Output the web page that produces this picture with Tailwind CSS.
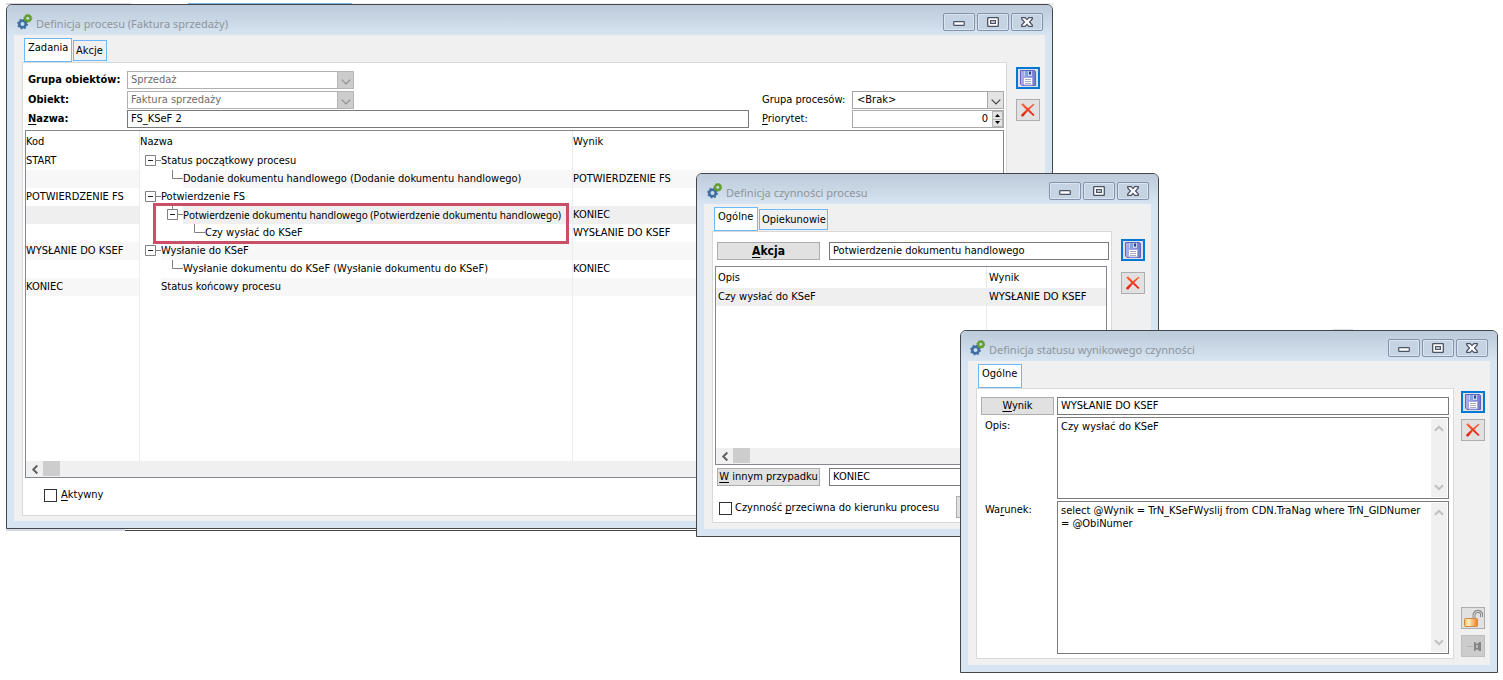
<!DOCTYPE html>
<html lang="pl">
<head>
<meta charset="utf-8">
<title>Definicja procesu</title>
<script src="https://cdn.jsdelivr.net/npm/@tailwindcss/browser@4"></script>
</head>
<body class="relative min-h-screen overflow-hidden bg-white font-['DejaVu_Sans_Condensed','DejaVu_Sans',sans-serif] text-[11px] leading-[18px] text-black">

<!-- Shared icons -->
<svg class="absolute size-0" aria-hidden="true">
  <defs>
    <linearGradient id="floppyFill" x1="0" y1="0" x2="1" y2="0"><stop offset="0" stop-color="#aeb2f0"/><stop offset="1" stop-color="#7478cf"/></linearGradient>
    <linearGradient id="brass" x1="0" y1="0" x2="1" y2="0"><stop offset="0" stop-color="#f7b64a"/><stop offset=".3" stop-color="#fff0c4"/><stop offset="1" stop-color="#ef7f1c"/></linearGradient>
    <linearGradient id="red" x1="0" y1="0" x2="0" y2="1"><stop offset="0" stop-color="#ff6a3c"/><stop offset="1" stop-color="#e81408"/></linearGradient>
    <symbol id="gears" viewBox="0 0 16 16">
      <circle cx="5.5" cy="10" r="3.3" fill="none" stroke="#3f6ea3" stroke-width="2.6"/>
      <circle cx="5.5" cy="10" r="4.7" fill="none" stroke="#3f6ea3" stroke-width="1.4" stroke-dasharray="1.8 1.9"/>
      <circle cx="10.8" cy="4.3" r="2.7" fill="none" stroke="#63a02c" stroke-width="2.3"/>
      <circle cx="10.8" cy="4.3" r="3.9" fill="none" stroke="#63a02c" stroke-width="1" stroke-dasharray="1.5 1.5"/>
    </symbol>
    <symbol id="floppy" viewBox="0 0 16 16">
      <path d="M.5.5h14l1 1v14H2L.5 14z" fill="url(#floppyFill)" stroke="#6366bd"/>
      <path d="M4 1h8v5H4z" fill="#c3d4f5"/><path d="M5 1h3v5H5z" fill="#7fa3e2"/><path d="M9 1.500h2v3H9z" fill="#2f3f86"/>
      <path d="M3.500 7.500h9V15h-9z" fill="#fff" stroke="#a5a8e6"/>
      <path d="M5 9.500h6M5 11.500h6M5 13.500h6" stroke="#a9acb8"/>
    </symbol>
    <symbol id="cross" viewBox="0 0 16 16">
      <path d="M1.200 2.600 3 1.200 8 6.200 13.400 1.800 14.600 2.600 9.300 7.600 14.500 13 13.300 14 7.800 9.100 3.300 14.600 1.200 14.300 1.400 12.500 6.300 7.700z" fill="url(#red)"/>
    </symbol>
    <symbol id="padlock" viewBox="0 0 20 19">
      <path d="M11 10V6a4 4 0 0 1 7.500-1.500V8" fill="none" stroke="#8b8b8b" stroke-width="3"/>
      <path d="M11 10V6a4 4 0 0 1 7.500-1.500V8" fill="none" stroke="#dcdcdc" stroke-width="1"/>
      <rect x="1.500" y="9.500" width="13" height="8" rx="1" fill="url(#brass)" stroke="#c98b45"/>
    </symbol>
    <symbol id="pin" viewBox="0 0 20 16">
      <path d="M4 8.500h6" stroke="#b4b4b4"/><path d="M11 4h1.500v1.500h3V4H18v9h-2.500v-1.500h-3V13H11z" fill="#858585"/><path d="M13 7h2v3h-2z" fill="#bababa"/>
    </symbol>
    <symbol id="wmin" viewBox="0 0 12 12"><rect x=".7" y="5.700" width="10.600" height="3.600" rx=".6" fill="#fff" stroke="#4b5263" stroke-width="1.200"/></symbol>
    <symbol id="wmax" viewBox="0 0 12 12"><rect x=".7" y="1.700" width="10.600" height="8.600" rx=".6" fill="#fff" stroke="#4b5263" stroke-width="1.300"/><rect x="3.600" y="4.600" width="4.800" height="2.800" fill="#dfe6f0" stroke="#4b5263" stroke-width="1.200"/></symbol>
    <symbol id="wclose" viewBox="0 0 12 12"><path d="M.7 1.700H4.200L6 3.700 7.800 1.700H11.300V3L8.500 6 11.300 9V10.300H7.800L6 8.300 4.200 10.300H.7V9L3.500 6 .7 3z" fill="#fff" stroke="#4b5263" stroke-width="1.200"/></symbol>
    <symbol id="chev" viewBox="0 0 10 6"><path d="M.7.700 5 5 9.300.700" fill="none" stroke="currentColor" stroke-width="1.200"/></symbol>
    <symbol id="chevBold" viewBox="0 0 10 7"><path d="M1 1.200 5 5.200 9 1.200" fill="none" stroke="currentColor" stroke-width="2"/></symbol>
  </defs>
</svg>

<!-- Edges of the window that lies underneath -->
<div class="absolute left-[6px] top-[3px] h-[2px] w-[125px] bg-[#d8d8de]"></div>
<div class="absolute left-[188px] top-[3px] h-[2px] w-[164px] bg-[#79b4e8]"></div>
<div class="absolute left-[352px] top-[3px] h-[2px] w-[702px] bg-[#ededed]"></div>
<div class="absolute left-[6px] top-[529px] h-[2px] w-[119px] bg-[#d5d9e8]"></div>
<div class="absolute left-[125px] top-[530px] h-[1px] w-[580px] bg-[#444]"></div>
<div class="absolute left-[1333px] top-[329px] h-[1px] w-[20px] bg-[#ddd]"></div>

<!-- Window 1: process definition -->
<section class="absolute left-[6px] top-[4px] flex h-[525px] w-[1047px] flex-col rounded-t-[6px] border border-[#43464b] bg-[#d7e4f2]">
  <header class="flex h-[30px] shrink-0 items-center rounded-t-[5px] bg-linear-to-b from-[#bccad9] to-[#d7e4f2] pl-[10px] pr-[9px]">
    <svg class="mt-1 size-4"><use href="#gears"/></svg>
    <h1 class="ml-[3px] mt-2 flex-1 font-['Noto_Sans',sans-serif] text-[11px] text-[#8d959e]">Definicja procesu (Faktura sprzedaży)</h1>
    <div class="mt-1 flex gap-[2px]">
      <button aria-label="Minimalizuj" class="grid h-[18px] w-8 place-items-center rounded-[2px] border border-[#8493ad] bg-[#c6d3e2] shadow-[inset_0_0_0_1px_#dbe5f0]"><svg class="size-3"><use href="#wmin"/></svg></button>
      <button aria-label="Maksymalizuj" class="grid h-[18px] w-8 place-items-center rounded-[2px] border border-[#8493ad] bg-[#c6d3e2] shadow-[inset_0_0_0_1px_#dbe5f0]"><svg class="size-3"><use href="#wmax"/></svg></button>
      <button aria-label="Zamknij" class="grid h-[18px] w-8 place-items-center rounded-[2px] border border-[#8493ad] bg-[#c6d3e2] shadow-[inset_0_0_0_1px_#dbe5f0]"><svg class="size-3"><use href="#wclose"/></svg></button>
    </div>
  </header>
  <div class="mx-[7px] mb-[7px] flex min-h-0 flex-1 bg-[#f0f0f0] pb-[5px] pl-2 pr-[5px]">
    <div class="flex min-w-0 flex-1 flex-col">
      <nav class="flex h-[27px] gap-px pl-[2px] pt-[3px]">
        <button class="h-6 w-12 border border-[#6cb9f9] bg-white pb-1 pl-[3px] text-left">Zadania</button>
        <button class="mt-[2px] h-[21px] w-[34px] border border-[#6cb9f9] bg-[#f0f0f0] pl-[2px] text-left">Akcje</button>
      </nav>
      <div class="flex min-h-0 flex-1 flex-col border border-[#d9d9d9] bg-white pl-[2px] pr-[2px] pt-2">
        <form class="grid grid-cols-[102px_minmax(0,1fr)_103px_152px] grid-rows-[20px_19px_20px]">
          <label for="grp" class="pl-[3px] font-bold">Grupa obiektów:</label>
          <div class="relative h-[18px] w-[227px]">
            <select id="grp" disabled class="h-[18px] w-full appearance-none border border-[#b0b0b0] bg-white pl-[3px] leading-4 text-[#6d6d6d] opacity-100"><option>Sprzedaż</option></select>
            <span class="pointer-events-none absolute inset-y-0 right-0 grid w-[17px] place-items-center border border-[#b5b5b5] bg-[#cccccc] text-[#8f8f8f]"><svg class="mt-1 h-[6px] w-[10px]"><use href="#chev"/></svg></span>
          </div>
          <span></span><span></span>
          <label for="obj" class="pl-[3px] font-bold">Obiekt:</label>
          <div class="relative h-[18px] w-[227px]">
            <select id="obj" disabled class="h-[18px] w-full appearance-none border border-[#b0b0b0] bg-white pl-[3px] leading-4 text-[#6d6d6d] opacity-100"><option>Faktura sprzedaży</option></select>
            <span class="pointer-events-none absolute inset-y-0 right-0 grid w-[17px] place-items-center border border-[#b5b5b5] bg-[#cccccc] text-[#8f8f8f]"><svg class="mt-1 h-[6px] w-[10px]"><use href="#chev"/></svg></span>
          </div>
          <label for="gp" class="pl-[13px]">Grupa procesów:</label>
          <div class="relative h-[18px]">
            <select id="gp" class="h-[18px] w-full appearance-none border border-[#a3a3a3] bg-white pl-1 leading-4"><option>&lt;Brak&gt;</option></select>
            <span class="pointer-events-none absolute inset-y-0 right-0 grid w-[17px] place-items-center border border-[#a9a9a9] bg-[#e3e3e3] text-[#444]"><svg class="mt-1 h-[6px] w-[10px]"><use href="#chev"/></svg></span>
          </div>
          <label for="nazwa" class="pl-[3px] font-bold"><u class="underline-offset-2">N</u>azwa:</label>
          <input id="nazwa" value="FS_KSeF 2" class="h-[18px] w-full border border-[#7a7a7a] bg-white pl-[3px]">
          <label for="prio" class="pl-[13px]"><u class="underline-offset-2">P</u>riorytet:</label>
          <div class="flex h-[18px] border border-[#a9a9a9] bg-white">
            <input id="prio" value="0" class="min-w-0 flex-1 pr-1 text-right">
            <span class="flex w-[11px] flex-col border border-[#b5b5b5] bg-[#e3e3e3]">
              <button type="button" aria-label="Zwiększ" class="grid flex-1 place-items-center border-b border-[#b5b5b5]"><svg class="h-[3px] w-[5px]" viewBox="0 0 5 3"><path d="M0 3 2.500 0 5 3z"/></svg></button>
              <button type="button" aria-label="Zmniejsz" class="grid flex-1 place-items-center"><svg class="h-[3px] w-[5px]" viewBox="0 0 5 3"><path d="M0 0 2.500 3 5 0z"/></svg></button>
            </span>
          </div>
        </form>

        <div class="relative flex min-h-0 flex-1 flex-col border border-[#828790]">
          <table class="h-full w-full table-fixed border-separate border-spacing-0 whitespace-nowrap">
            <colgroup><col class="w-[113px]"><col class="w-[433px]"><col></colgroup>
            <thead><tr class="h-[21px] text-left align-middle [&>th]:p-0 [&>th]:font-normal [&>th+th]:border-l [&>th+th]:border-[#e8e8e8]"><th>Kod</th><th>Nazwa</th><th>Wynik</th></tr></thead>
            <tbody class="[&_td]:h-[18px] [&_td]:p-0 [&_td+td]:border-l [&_td+td]:border-[#ececec]">
              <tr><td>START</td><td><div class="flex h-[18px] pl-[5px]"><svg class="h-[18px] w-4" viewBox="0 0 16 18"><path d="M.5 3.500h10v10H.5zM11 8.500h5" fill="none" stroke="#808080"/><path d="M3 8.500h5" stroke="#222"/></svg><span class="flex-1">Status początkowy procesu</span></div></td><td></td></tr>
              <tr><td class="bg-[#f7f7f7]"></td><td><div class="flex h-[18px] pl-8"><svg class="h-[18px] w-[11px]" viewBox="0 0 11 18"><path d="M.5 0v8.500H11" fill="none" stroke="#808080"/></svg><span class="flex-1 bg-[#f7f7f7]">Dodanie dokumentu handlowego (Dodanie dokumentu handlowego)</span></div></td><td class="bg-[#f7f7f7]">POTWIERDZENIE FS</td></tr>
              <tr><td>POTWIERDZENIE FS</td><td><div class="flex h-[18px] pl-[5px]"><svg class="h-[18px] w-4" viewBox="0 0 16 18"><path d="M.5 3.500h10v10H.5zM11 8.500h5" fill="none" stroke="#808080"/><path d="M3 8.500h5" stroke="#222"/></svg><span class="flex-1">Potwierdzenie FS</span></div></td><td></td></tr>
              <tr><td class="bg-[#efefef]"></td><td><div class="flex h-[18px] pl-[27px]"><svg class="h-[18px] w-4" viewBox="0 0 16 18"><path d="M5.500 0v3M.5 3.500h10v10H.5zM11 8.500h5" fill="none" stroke="#808080"/><path d="M3 8.500h5" stroke="#222"/></svg><span class="flex-1 bg-[#efefef] font-['Noto_Sans',sans-serif] text-[10px]">Potwierdzenie dokumentu handlowego (Potwierdzenie dokumentu handlowego)</span></div></td><td class="bg-[#efefef]">KONIEC</td></tr>
              <tr><td></td><td><div class="flex h-[18px] pl-[54px]"><svg class="h-[18px] w-[11px]" viewBox="0 0 11 18"><path d="M.5 0v8.500H11" fill="none" stroke="#808080"/></svg><span class="flex-1">Czy wysłać do KSeF</span></div></td><td>WYSŁANIE DO KSEF</td></tr>
              <tr><td class="bg-[#f7f7f7]">WYSŁANIE DO KSEF</td><td><div class="flex h-[18px] pl-[5px]"><svg class="h-[18px] w-4" viewBox="0 0 16 18"><path d="M.5 3.500h10v10H.5zM11 8.500h5" fill="none" stroke="#808080"/><path d="M3 8.500h5" stroke="#222"/></svg><span class="flex-1 bg-[#f7f7f7]">Wysłanie do KSeF</span></div></td><td class="bg-[#f7f7f7]"></td></tr>
              <tr><td></td><td><div class="flex h-[18px] pl-8"><svg class="h-[18px] w-[11px]" viewBox="0 0 11 18"><path d="M.5 0v8.500H11" fill="none" stroke="#808080"/></svg><span class="flex-1">Wysłanie dokumentu do KSeF (Wysłanie dokumentu do KSeF)</span></div></td><td>KONIEC</td></tr>
              <tr><td class="bg-[#f7f7f7]">KONIEC</td><td><div class="flex h-[18px] pl-[21px]"><span class="flex-1 bg-[#f7f7f7]">Status końcowy procesu</span></div></td><td class="bg-[#f7f7f7]"></td></tr>
              <tr class="h-full"><td></td><td></td><td></td></tr>
            </tbody>
          </table>
          <div class="flex h-4 shrink-0 bg-[#f0f0f0]">
            <button aria-label="Przewiń w lewo" class="grid w-[17px] place-items-center text-[#606060]"><svg class="h-[7px] w-[10px] rotate-90"><use href="#chevBold"/></svg></button>
            <span class="h-[15px] w-[17px] bg-[#cdcdcd]"></span>
          </div>
          <div class="pointer-events-none absolute left-[127px] top-[72px] h-[41px] w-[416px] border-[3px] border-[#c94f66]"></div>
        </div>
        <label class="mb-[11px] ml-[19px] mt-2 flex h-[18px] items-center gap-1"><input type="checkbox" class="size-[13px] appearance-none border border-[#333] bg-white"><span><u class="underline-offset-2">A</u>ktywny</span></label>
      </div>
    </div>
    <aside class="ml-[9px] mt-8 flex w-6 flex-col gap-[10px]">
      <button aria-label="Zapisz" class="grid h-[22px] w-6 place-items-center border-2 border-[#0078d7] bg-[#e1e1e1]"><svg class="size-4"><use href="#floppy"/></svg></button>
      <button aria-label="Anuluj" class="grid h-[22px] w-6 place-items-center border border-[#adadad] bg-[#e1e1e1]"><svg class="size-4"><use href="#cross"/></svg></button>
    </aside>
  </div>
</section>

<!-- Window 2: process action -->
<section class="absolute left-[696px] top-[173px] flex h-[364px] w-[463px] flex-col rounded-t-[6px] border border-[#43464b] bg-[#d7e4f2]">
  <header class="flex h-[30px] shrink-0 items-center rounded-t-[5px] bg-linear-to-b from-[#bccad9] to-[#d7e4f2] pl-[10px] pr-[9px]">
    <svg class="mt-1 size-4"><use href="#gears"/></svg>
    <h1 class="ml-[3px] mt-2 flex-1 font-['Noto_Sans',sans-serif] text-[11px] text-[#8d959e]">Definicja czynności procesu</h1>
    <div class="mt-1 flex gap-[2px]">
      <button aria-label="Minimalizuj" class="grid h-[18px] w-8 place-items-center rounded-[2px] border border-[#8493ad] bg-[#c6d3e2] shadow-[inset_0_0_0_1px_#dbe5f0]"><svg class="size-3"><use href="#wmin"/></svg></button>
      <button aria-label="Maksymalizuj" class="grid h-[18px] w-8 place-items-center rounded-[2px] border border-[#8493ad] bg-[#c6d3e2] shadow-[inset_0_0_0_1px_#dbe5f0]"><svg class="size-3"><use href="#wmax"/></svg></button>
      <button aria-label="Zamknij" class="grid h-[18px] w-8 place-items-center rounded-[2px] border border-[#8493ad] bg-[#c6d3e2] shadow-[inset_0_0_0_1px_#dbe5f0]"><svg class="size-3"><use href="#wclose"/></svg></button>
    </div>
  </header>
  <div class="mx-[7px] mb-[7px] flex min-h-0 flex-1 bg-[#f0f0f0] pb-[6px] pl-2 pr-[6px]">
    <div class="flex min-w-0 flex-1 flex-col">
      <nav class="flex h-[27px] gap-px pl-[2px] pt-[3px]">
        <button class="h-6 w-11 border border-[#6cb9f9] bg-white pb-1 pl-[3px] text-left">Ogólne</button>
        <button class="mt-[2px] h-[21px] w-[69px] border border-[#6cb9f9] bg-[#f0f0f0] pl-[2px] text-left">Opiekunowie</button>
      </nav>
      <div class="flex min-h-0 flex-1 flex-col border border-[#d9d9d9] bg-white pl-[2px] pr-[2px] pt-[10px]">
        <div class="flex gap-[9px] pl-[2px]">
          <button class="h-[18px] w-[103px] border border-[#adadad] bg-[#e1e1e1] text-[12px] font-bold leading-4"><u class="underline-offset-2">A</u>kcja</button>
          <input aria-label="Akcja" value="Potwierdzenie dokumentu handlowego" class="h-[18px] min-w-0 flex-1 border border-[#7a7a7a] bg-white pl-[3px]">
        </div>
        <div class="mr-[2px] mt-[6px] flex min-h-0 flex-1 flex-col border border-[#828790]">
          <table class="h-full w-full table-fixed border-separate border-spacing-0 whitespace-nowrap">
            <colgroup><col class="w-[270px]"><col></colgroup>
            <thead><tr class="h-[21px] text-left align-middle [&>th]:p-0 [&>th]:pl-[2px] [&>th]:font-normal [&>th+th]:border-l [&>th+th]:border-[#e8e8e8]"><th>Opis</th><th>Wynik</th></tr></thead>
            <tbody class="[&_td]:h-[18px] [&_td]:p-0 [&_td]:pl-[2px] [&_td+td]:border-l [&_td+td]:border-[#ececec]">
              <tr class="bg-[#efefef]"><td>Czy wysłać do KSeF</td><td>WYSŁANIE DO KSEF</td></tr>
              <tr class="h-full"><td></td><td></td></tr>
            </tbody>
          </table>
          <div class="flex h-4 shrink-0 bg-[#f0f0f0]">
            <button aria-label="Przewiń w lewo" class="grid w-[17px] place-items-center text-[#606060]"><svg class="h-[7px] w-[10px] rotate-90"><use href="#chevBold"/></svg></button>
            <span class="h-[15px] w-[17px] bg-[#cdcdcd]"></span>
          </div>
        </div>
        <div class="mt-[3px] flex gap-[9px] pl-[2px]">
          <button class="h-[18px] w-[103px] whitespace-nowrap border border-[#adadad] bg-[#e1e1e1] leading-4"><u class="underline-offset-2">W</u> innym przypadku</button>
          <input aria-label="W innym przypadku" value="KONIEC" class="h-[18px] min-w-0 flex-1 border border-[#7a7a7a] bg-white pl-[3px]">
        </div>
        <div class="mb-1 mt-[10px] flex h-[22px] items-center pl-1">
          <label class="mt-[2px] flex w-[237px] items-center gap-[3px] whitespace-nowrap"><input type="checkbox" class="size-[13px] appearance-none border border-[#333] bg-white"><span>Czynność <u class="underline-offset-2">p</u>rzeciwna do kierunku procesu</span></label>
          <button aria-label="Więcej" class="h-[22px] w-[100px] border border-[#adadad] bg-[#e1e1e1]"></button>
        </div>
      </div>
    </div>
    <aside class="ml-[9px] mt-[35px] flex w-6 flex-col gap-[11px]">
      <button aria-label="Zapisz" class="grid h-[22px] w-6 place-items-center border-2 border-[#0078d7] bg-[#e1e1e1]"><svg class="size-4"><use href="#floppy"/></svg></button>
      <button aria-label="Anuluj" class="grid h-[22px] w-6 place-items-center border border-[#adadad] bg-[#e1e1e1]"><svg class="size-4"><use href="#cross"/></svg></button>
    </aside>
  </div>
</section>

<!-- Window 3: resulting status -->
<section class="absolute left-[960px] top-[330px] flex h-[343px] w-[538px] flex-col rounded-t-[6px] border border-[#43464b] bg-[#d7e4f2]">
  <header class="flex h-[30px] shrink-0 items-center rounded-t-[5px] bg-linear-to-b from-[#bccad9] to-[#d7e4f2] pl-[9px] pr-[9px]">
    <svg class="mt-1 size-4"><use href="#gears"/></svg>
    <h1 class="ml-[3px] mt-2 flex-1 font-['Noto_Sans',sans-serif] text-[11px] text-[#8d959e]">Definicja statusu wynikowego czynności</h1>
    <div class="mt-1 flex gap-[2px]">
      <button aria-label="Minimalizuj" class="grid h-[18px] w-8 place-items-center rounded-[2px] border border-[#8493ad] bg-[#c6d3e2] shadow-[inset_0_0_0_1px_#dbe5f0]"><svg class="size-3"><use href="#wmin"/></svg></button>
      <button aria-label="Maksymalizuj" class="grid h-[18px] w-8 place-items-center rounded-[2px] border border-[#8493ad] bg-[#c6d3e2] shadow-[inset_0_0_0_1px_#dbe5f0]"><svg class="size-3"><use href="#wmax"/></svg></button>
      <button aria-label="Zamknij" class="grid h-[18px] w-8 place-items-center rounded-[2px] border border-[#8493ad] bg-[#c6d3e2] shadow-[inset_0_0_0_1px_#dbe5f0]"><svg class="size-3"><use href="#wclose"/></svg></button>
    </div>
  </header>
  <div class="mx-[7px] mb-[7px] flex min-h-0 flex-1 bg-[#f0f0f0] pb-[6px] pl-2 pr-[5px]">
    <div class="flex min-w-0 flex-1 flex-col">
      <nav class="flex h-[27px] pl-[2px] pt-[3px]">
        <button class="h-6 w-11 border border-[#6cb9f9] bg-white pb-1 pl-[3px] text-left">Ogólne</button>
      </nav>
      <div class="grid min-h-0 flex-1 grid-cols-[73px_minmax(0,1fr)] grid-rows-[18px_82px_minmax(0,1fr)] gap-x-[3px] gap-y-[2px] border border-[#d9d9d9] bg-white pb-1 pl-1 pr-1 pt-2">
        <button class="h-[18px] border border-[#adadad] bg-[#e1e1e1] leading-4"><u class="underline-offset-2">W</u>ynik</button>
        <input aria-label="Wynik" value="WYSŁANIE DO KSEF" class="h-[18px] w-full border border-[#7a7a7a] bg-white pl-[3px]">
        <label for="opis" class="pl-1">Opis:</label>
        <div class="flex border border-[#7a7a7a] bg-white p-px">
          <textarea id="opis" class="min-w-0 flex-1 resize-none overflow-hidden pl-[2px] pt-px leading-[13px]">Czy wysłać do KSeF</textarea>
          <span class="flex w-4 flex-col items-center justify-between bg-[#f0f0f0] py-[6px] text-[#bfbfbf]"><svg class="h-[7px] w-[10px] rotate-180"><use href="#chevBold"/></svg><svg class="h-[7px] w-[10px]"><use href="#chevBold"/></svg></span>
        </div>
        <label for="war" class="pl-1">Wa<u class="underline-offset-2">r</u>unek:</label>
        <div class="flex border border-[#7a7a7a] bg-white p-px">
          <textarea id="war" class="min-w-0 flex-1 resize-none overflow-hidden pl-[2px] pt-px leading-[13px]">select @Wynik = TrN_KSeFWyslij from CDN.TraNag where TrN_GIDNumer
= @ObiNumer</textarea>
          <span class="flex w-4 flex-col items-center justify-between bg-[#f0f0f0] py-[6px] text-[#bfbfbf]"><svg class="h-[7px] w-[10px] rotate-180"><use href="#chevBold"/></svg><svg class="h-[7px] w-[10px]"><use href="#chevBold"/></svg></span>
        </div>
      </div>
    </div>
    <aside class="ml-[7px] mt-[30px] flex w-6 flex-col gap-[6px]">
      <button aria-label="Zapisz" class="grid h-[22px] w-6 place-items-center border-2 border-[#0078d7] bg-[#e1e1e1]"><svg class="size-4"><use href="#floppy"/></svg></button>
      <button aria-label="Anuluj" class="grid h-[22px] w-6 place-items-center border border-[#adadad] bg-[#e1e1e1]"><svg class="size-4"><use href="#cross"/></svg></button>
      <button aria-label="Odblokuj" class="mt-auto grid h-[22px] w-6 place-items-center border border-[#adadad] bg-[#e1e1e1]"><svg class="h-[19px] w-5"><use href="#padlock"/></svg></button>
      <button aria-label="Przypnij" disabled class="mb-[2px] grid h-[22px] w-6 place-items-center border border-[#bfbfbf] bg-[#cccccc]"><svg class="h-4 w-5"><use href="#pin"/></svg></button>
    </aside>
  </div>
</section>
</body>
</html>
